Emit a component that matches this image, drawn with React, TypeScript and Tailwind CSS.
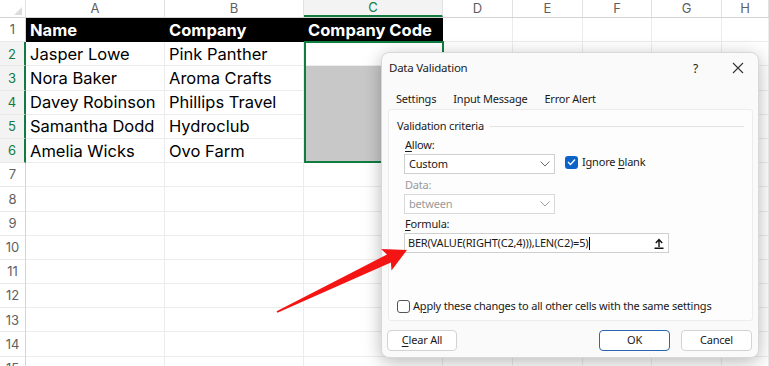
import React from "react";

const colW = [139, 139, 139, 70, 70, 69, 70, 47];
const colL = ["A", "B", "C", "D", "E", "F", "G", "H"];
const data: string[][] = [
  ["Name", "Company", "Company Code"],
  ["Jasper Lowe", "Pink Panther", ""],
  ["Nora Baker", "Aroma Crafts", ""],
  ["Davey Robinson", "Phillips Travel", ""],
  ["Samantha Dodd", "Hydroclub", ""],
  ["Amelia Wicks", "Ovo Farm", ""],
];

const sheetFont = { fontFamily: "Inter, 'Liberation Sans', sans-serif" };
const uiFont = { fontFamily: "'Noto Sans', 'Open Sans', sans-serif" };

function Chevron({ gray }: { gray?: boolean }) {
  return (
    <svg width="10" height="6" viewBox="0 0 10 6" className="shrink-0">
      <path d="M0.5 0.5 L5 5 L9.5 0.5" fill="none" stroke={gray ? "#a0a0a0" : "#6a6a6a"} strokeWidth="1" />
    </svg>
  );
}

function Sheet() {
  return (
    <div className="flex flex-col" style={sheetFont}>
      <div className="flex h-[18px] border-b border-[#d4d4d4]">
        <div className="w-[26px] shrink-0 relative border-r border-[#e1e1e1]">
          <svg className="absolute right-[3px] bottom-[2px]" width="8" height="8" viewBox="0 0 8 8">
            <path d="M8 0 L8 8 L0 8 Z" fill="#dcdcdc" />
          </svg>
        </div>
        {colW.map((w, i) => (
          <div
            key={i}
            style={{ width: w }}
            className={
              "shrink-0 flex items-center justify-center text-[13px] border-r border-[#e1e1e1] " +
              (i === 2 ? "text-[#107c41] bg-[#f3f3f3] border-b-2 border-b-[#107c41]" : "text-[#5f5f5f]")
            }
          >
            {colL[i]}
          </div>
        ))}
      </div>
      {Array.from({ length: 15 }).map((_, r) => {
        const sel = r >= 1 && r <= 5;
        return (
          <div key={r} className="flex h-[24.2px] shrink-0">
            <div
              className={
                "w-[26px] shrink-0 flex items-center justify-center pt-[1px] text-[13px] border-b border-[#e8e8e8] " +
                (sel
                  ? "text-[#107c41] bg-[#f3f3f3] border-r-2 border-r-[#107c41]"
                  : "text-[#5f5f5f] border-r border-r-[#d4d4d4]")
              }
            >
              {r + 1}
            </div>
            {colW.map((w, c) => {
              const txt = data[r]?.[c] ?? "";
              const head = r === 0 && c < 3;
              const gray = c === 2 && r >= 2 && r <= 5;
              return (
                <div
                  key={c}
                  style={{ width: w }}
                  className={
                    "shrink-0 flex items-center pt-[1px] pl-[4px] whitespace-nowrap overflow-hidden text-[16.5px] " +
                    (head
                      ? "bg-black text-white font-bold"
                      : gray
                      ? "bg-[#c8c8c8] text-black"
                      : "text-black border-r border-b border-[#ececec]")
                  }
                >
                  {txt}
                </div>
              );
            })}
          </div>
        );
      })}
    </div>
  );
}

function Dialog() {
  return (
    <div
      className="absolute left-[381px] top-[52px] w-[378px] h-[306px] rounded-[8px] bg-[#fafafa] border border-[#d8d8d8] shadow-[0_4px_18px_rgba(0,0,0,0.28)] flex flex-col text-[11px] tracking-[-0.2px] text-[#1a1a1a]"
      style={uiFont}
    >
      <div className="h-[29px] flex items-center pl-[7px] relative shrink-0">
        <span className="text-[11.5px] tracking-[-0.25px]">Data Validation</span>
        <span className="absolute left-[311px] top-[7px] text-[12px]">?</span>
        <svg className="absolute left-[350px] top-[9px]" width="12" height="12" viewBox="0 0 12 12">
          <path d="M1 1 L11 11 M11 1 L1 11" stroke="#333" strokeWidth="1.1" />
        </svg>
      </div>
      <div className="flex h-[27px] items-center pt-[8px] pl-[14px] gap-[17px] shrink-0">
        <span>Settings</span>
        <span>Input Message</span>
        <span>Error Alert</span>
      </div>
      <div className="ml-[6px] w-[365px] h-[212px] bg-[#fdfdfd] border border-[#ececec] rounded-[3px] flex flex-col pl-[8px] shrink-0">
        <div className="flex items-center mt-[7px] h-[18px]">
          <span>Validation criteria</span>
          <div className="flex-1 h-px bg-[#e3e3e3] ml-[6px] mr-[8px]" />
        </div>
        <div className="ml-[8px] mt-[2px] h-[16px] flex items-center">
          <span><span className="underline underline-offset-2">A</span>llow:</span>
        </div>
        <div className="flex items-center ml-[7px] mt-[1px] gap-[10px]">
          <div className="w-[151px] h-[20px] bg-white border border-[#cfcfcf] flex items-center justify-between pl-[4px] pr-[4px]">
            <span>Custom</span>
            <Chevron />
          </div>
          <div className="flex items-center gap-[4px] self-start">
            <div className="w-[13px] h-[13px] rounded-[3px] bg-[#0b63c8] flex items-center justify-center">
              <svg width="9" height="8" viewBox="0 0 9 8">
                <path d="M1 4 L3.5 6.5 L8 1.5" fill="none" stroke="white" strokeWidth="1.3" />
              </svg>
            </div>
            <span>Ignore <span className="underline underline-offset-2">b</span>lank</span>
          </div>
        </div>
        <div className="ml-[8px] mt-[3px] h-[16px] flex items-center text-[#9a9a9a]">Data:</div>
        <div className="ml-[7px] mt-[1px] w-[151px] h-[20px] bg-white border border-[#d9d9d9] flex items-center justify-between pl-[4px] pr-[4px] text-[#9a9a9a]">
          <span>between</span>
          <Chevron gray />
        </div>
        <div className="ml-[8px] mt-[2px] h-[16px] flex items-center">
          <span><span className="underline underline-offset-2">F</span>ormula:</span>
        </div>
        <div className="ml-[7px] mt-[1px] w-[265px] h-[20px] bg-white border border-[#cfcfcf] flex items-center pl-[3px] pr-[1px]">
          <span className="text-[11px] tracking-[-0.2px] whitespace-nowrap">BER(VALUE(RIGHT(C2,4))),LEN(C2)=5)</span>
          <div className="w-px h-[13px] bg-black ml-[1px]" />
          <div className="flex-1" />
          <div className="w-[16px] h-[16px] flex items-center justify-center">
            <svg width="10" height="11" viewBox="0 0 10 11">
              <path d="M5 9 V2 M1.8 5 L5 1.6 L8.2 5 M0.5 10.3 H9.5" fill="none" stroke="#111" strokeWidth="1.4" />
            </svg>
          </div>
        </div>
        <div className="flex items-center mt-[45px] gap-[3px]">
          <div className="w-[13px] h-[13px] rounded-[3px] border border-[#555] bg-white shrink-0" />
          <span className="whitespace-nowrap">
            A<span className="underline underline-offset-2">p</span>ply these changes to all other cells with the same settings
          </span>
        </div>
      </div>
      <div className="flex items-center mt-[9px] pl-[5px] pr-[6px]">
        <div className="w-[70px] h-[21px] bg-white border border-[#d3d3d3] rounded-[4px] flex items-center justify-center">
          <span><span className="underline underline-offset-2">C</span>lear All</span>
        </div>
        <div className="flex-1" />
        <div className="w-[71px] h-[21px] bg-white border border-[#2b67b0] rounded-[4px] flex items-center justify-center">
          OK
        </div>
        <div className="w-[71px] h-[21px] ml-[11px] bg-white border border-[#d3d3d3] rounded-[4px] flex items-center justify-center">
          Cancel
        </div>
      </div>
    </div>
  );
}

export default function App() {
  return (
    <div className="relative w-[769px] h-[366px] overflow-hidden bg-white">
      <Sheet />
      <div className="absolute left-[304px] top-[41px] w-[140px] h-[122px] border-2 border-[#107c41] pointer-events-none" />
      <Dialog />
      <svg className="absolute left-0 top-0 pointer-events-none" width="769" height="366" viewBox="0 0 769 366">
        <path d="M276.6 311.3 L387 254.5 L381.1 249 L407 249.9 L391.5 270.6 L390.9 262.6 L277.4 312.7 Z" fill="#f41414" />
      </svg>
    </div>
  );
}
